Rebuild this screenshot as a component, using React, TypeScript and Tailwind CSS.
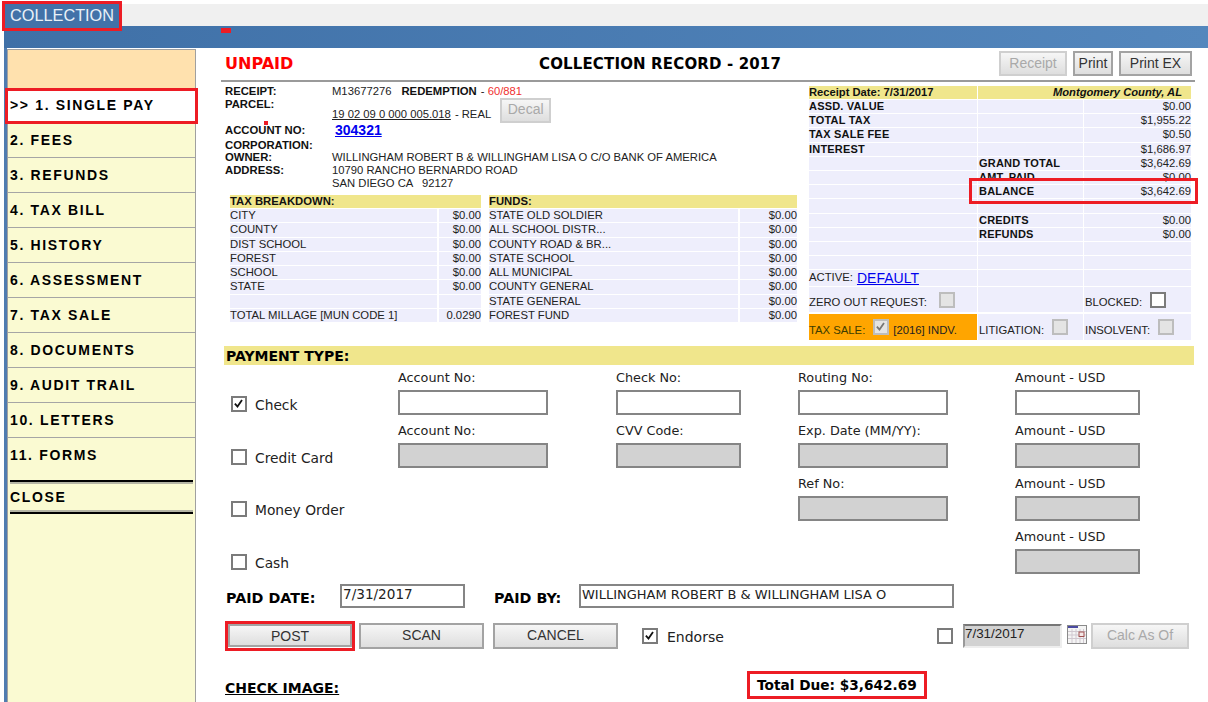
import React from 'react';

const menu = ['2. FEES', '3. REFUNDS', '4. TAX BILL', '5. HISTORY', '6. ASSESSMENT', '7. TAX SALE', '8. DOCUMENTS', '9. AUDIT TRAIL', '10. LETTERS', '11. FORMS'];

const taxRows = [
  ['CITY', '$0.00', 'STATE OLD SOLDIER', '$0.00'],
  ['COUNTY', '$0.00', 'ALL SCHOOL DISTR...', '$0.00'],
  ['DIST SCHOOL', '$0.00', 'COUNTY ROAD & BR...', '$0.00'],
  ['FOREST', '$0.00', 'STATE SCHOOL', '$0.00'],
  ['SCHOOL', '$0.00', 'ALL MUNICIPAL', '$0.00'],
  ['STATE', '$0.00', 'COUNTY GENERAL', '$0.00'],
  ['', '', 'STATE GENERAL', '$0.00'],
  ['TOTAL MILLAGE [MUN CODE 1]', '0.0290', 'FOREST FUND', '$0.00'],
];

const summaryRows = [
  ['ASSD. VALUE', '', '$0.00'],
  ['TOTAL TAX', '', '$1,955.22'],
  ['TAX SALE FEE', '', '$0.50'],
  ['INTEREST', '', '$1,686.97'],
  ['', 'GRAND TOTAL', '$3,642.69'],
  ['', 'AMT. PAID', '$0.00'],
  ['', 'BALANCE', '$3,642.69'],
  ['', '', ''],
  ['', 'CREDITS', '$0.00'],
  ['', 'REFUNDS', '$0.00'],
  ['', '', ''],
  ['', '', ''],
];

// checkbox, field labels per column (empty = no field)
const paymentRows = [
  { name: 'Check', checked: true, top: 'mt-[25px]', fields: ['Account No:', 'Check No:', 'Routing No:', 'Amount - USD'], enabled: true },
  { name: 'Credit Card', checked: false, top: 'mt-[25px]', fields: ['Account No:', 'CVV Code:', 'Exp. Date (MM/YY):', 'Amount - USD'], enabled: false },
  { name: 'Money Order', checked: false, top: 'mt-[24px]', fields: ['', '', 'Ref No:', 'Amount - USD'], enabled: false },
  { name: 'Cash', checked: false, top: 'mt-[24px]', fields: ['', '', '', 'Amount - USD'], enabled: false },
];

const fieldWidths = ['w-[150px]', 'w-[125px]', 'w-[150px]', 'w-[125px]'];

const CheckMark = ({ color = '#111' }: { color?: string }) => (
  <svg viewBox="0 0 16 16" className="w-full h-full">
    <path d="M2.5 7.5 L6 11.5 L12 2.8" fill="none" stroke={color} strokeWidth="2.4" />
  </svg>
);

const Box = ({ checked = false, disabled = false }: { checked?: boolean; disabled?: boolean }) => (
  <span
    className={`block shrink-0 w-[16px] h-[16px] border-2 ${
      disabled ? 'bg-[#e4e4e4] border-[#bdbdbd]' : 'bg-white border-[#7b7b7b]'
    }`}
  >
    {checked && <CheckMark color={disabled ? '#777' : '#111'} />}
  </span>
);

const Btn = ({ label, className, disabled = false }: { label: string; className: string; disabled?: boolean }) => (
  <button
    className={`block shrink-0 border-2 bg-gradient-to-b from-[#f6f6f6] to-[#dedede] text-center pb-[3px] ${
      disabled ? 'border-[#cfcfcf] text-[#a9a9a9]' : 'border-[#a3a3a3] text-[#333]'
    } ${className}`}
  >
    {label}
  </button>
);

const Sidebar = () => (
  <div className="w-[189px] mt-px border-x border-t border-[#a0a0a0] bg-[#fafad2] shrink-0 text-[14px] font-bold tracking-[1.65px] text-black">
    <div className="h-[38px] bg-[#ffe1ae]" />
    <div className="relative h-[36px] -mb-px -mx-[3px] bg-white border-[3px] border-[#ed1c24] flex items-center pl-[2px] pb-[2px]">&gt;&gt; 1. SINGLE PAY</div>
    {menu.map((item, i) => (
      <div key={item} className={`h-[35px] flex items-center pl-[2px] ${i < menu.length - 1 ? 'border-b border-[#a5a5a5]' : ''}`}>
        {item}
      </div>
    ))}
    <div className="mt-[7px] mx-[2px] h-[34px] border-y-2 border-black flex items-center shadow-[inset_0_2px_0_#b5b5a5,inset_0_-2px_0_#b5b5a5]">
      CLOSE
    </div>
  </div>
);

const InfoLabel = ({ children }: { children: React.ReactNode }) => (
  <span className="w-[107px] shrink-0 font-bold text-[11.3px] text-[#111]">{children}</span>
);

const Info = () => (
  <div className="h-[110px] relative text-[11.25px] text-[#222] leading-[13px]">
    <div className="h-[13px] flex">
      <InfoLabel>RECEIPT:</InfoLabel>
      <span>M13677276</span>
      <span className="ml-[10px] font-bold text-[11.3px] text-[#111]">REDEMPTION</span>
      <span className="ml-1">- <span className="text-[#f03030]">60/881</span></span>
    </div>
    <div className="h-[10px] flex"><InfoLabel>PARCEL:</InfoLabel></div>
    <div className="h-[14px] flex items-start">
      <span className="w-[107px]" />
      <span className="underline">19 02 09 0 000 005.018</span>
      <span className="ml-1">- REAL</span>
      <Btn label="Decal" disabled className="ml-[9px] -mt-[10px] w-[51px] h-[25px] text-[14px]" />
    </div>
    <div className="h-[14px] mt-px flex items-center">
      <InfoLabel>ACCOUNT NO:</InfoLabel>
      <a className="ml-[3px] text-[#0000ee] underline font-bold text-[14px]">304321</a>
    </div>
    <div className="h-[12px] mt-[2px] flex"><InfoLabel>CORPORATION:</InfoLabel></div>
    <div className="h-[13px] flex"><InfoLabel>OWNER:</InfoLabel><span>WILLINGHAM ROBERT B &amp; WILLINGHAM LISA O C/O BANK OF AMERICA</span></div>
    <div className="h-[13px] flex"><InfoLabel>ADDRESS:</InfoLabel><span>10790 RANCHO BERNARDO ROAD</span></div>
    <div className="h-[13px] flex"><span className="w-[107px]" /><span className="whitespace-pre">SAN DIEGO CA   92127</span></div>
    {/* stray marker from the annotation */}
    <span className="absolute left-[39px] top-[36px] w-[4px] h-[4px] bg-[#ed1c24]" />
  </div>
);

const TaxTables = () => (
  <div className="ml-[5px] w-[567px] text-[11.3px] text-[#222]">
    <div className="flex h-[13px] gap-[8px] font-bold text-[11.3px] text-[#111] leading-[13px]">
      <div className="w-[251px] bg-[#f0e68c]">TAX BREAKDOWN:</div>
      <div className="w-[308px] bg-[#f0e68c]">FUNDS:</div>
    </div>
    {taxRows.map((r, i) => (
      <div key={i} className="flex h-[14.3px] gap-[8px] leading-[13px] border-t border-white">
        <div className="w-[251px] flex bg-[#eeeefc]">
          <span className="w-[209px] border-r-2 border-white">{r[0]}</span>
          <span className="flex-1 text-right">{r[1]}</span>
        </div>
        <div className="w-[308px] flex bg-[#eeeefc]">
          <span className="w-[251px] border-r-2 border-white">{r[2]}</span>
          <span className="flex-1 text-right">{r[3]}</span>
        </div>
      </div>
    ))}
  </div>
);

const SummaryPanel = () => (
  <div className="relative w-[382px] ml-[12px] mt-[1px] text-[11.3px] text-[#222]">
    <div className="flex h-[13px] gap-px bg-white font-bold text-[11.2px] text-[#111] leading-[13px]">
      <div className="w-[168px] bg-[#f0e68c]">Receipt Date: 7/31/2017</div>
      <div className="flex-1 bg-[#f0e68c] text-right italic pr-[9px]">Montgomery County, AL</div>
    </div>
    {summaryRows.map((r, i) => (
      <div key={i} className="flex h-[14.2px] gap-px border-t border-white leading-[13px]">
        <div className="w-[168px] bg-[#eeeefc] font-bold text-[11px] tracking-[0.2px] text-[#111]">{r[0]}</div>
        <div className="w-[105px] bg-[#eeeefc] font-bold text-[11px] tracking-[0.2px] text-[#111] pl-px">{r[1]}</div>
        <div className="flex-1 bg-[#eeeefc] text-right">{r[2]}</div>
      </div>
    ))}
    <div className="flex h-[17px] gap-px border-t border-white">
      <div className="w-[168px] bg-[#eeeefc] flex items-end">
        ACTIVE: <a className="ml-1 text-[14px] leading-[16px] text-[#0000ee] underline">DEFAULT</a>
      </div>
      <div className="w-[105px] bg-[#eeeefc]" />
      <div className="flex-1 bg-[#eeeefc]" />
    </div>
    <div className="flex h-[27px] gap-px border-y border-white">
      <div className="w-[168px] bg-[#eeeefc] flex items-center">
        <span className="mt-[6px]">ZERO OUT REQUEST:</span>
        <span className="ml-[12px]"><Box disabled /></span>
      </div>
      <div className="w-[105px] bg-[#eeeefc]" />
      <div className="flex-1 bg-[#eeeefc] flex items-center pl-px">
        <span className="mt-[6px]">BLOCKED:</span>
        <span className="ml-[8px]"><Box /></span>
      </div>
    </div>
    <div className="flex h-[26px] gap-px mt-px">
      <div className="w-[168px] bg-[#ffa500] flex items-center text-[#3d3d00]">
        <span className="mt-[6px]">TAX SALE:</span>
        <span className="ml-[8px] mr-[4px]"><Box checked disabled /></span>
        <span className="mt-[6px] text-[#222]">[2016] INDV.</span>
      </div>
      <div className="w-[105px] bg-[#eeeefc] flex items-center pl-px">
        <span className="mt-[6px]">LITIGATION:</span>
        <span className="ml-[8px]"><Box disabled /></span>
      </div>
      <div className="flex-1 bg-[#eeeefc] flex items-center pl-px">
        <span className="mt-[6px]">INSOLVENT:</span>
        <span className="ml-[8px]"><Box disabled /></span>
      </div>
    </div>
    {/* BALANCE highlight */}
    <span className="absolute left-[160px] top-[92px] w-[229px] h-[26px] border-[3px] border-[#ed1c24]" />
  </div>
);

const Field = ({ label, width, enabled }: { label: string; width: string; enabled: boolean }) => (
  <div className="h-[53px]">
    {label && (
      <>
        <div className="h-[19px] leading-[13px] text-[12.8px] text-[#222]">{label}</div>
        <input
          readOnly
          className={`block h-[25px] border-2 border-[#858585] ${width} ${enabled ? 'bg-white' : 'bg-[#d2d2d2]'}`}
        />
      </>
    )}
  </div>
);

const Payment = () => (
  <div className="font-['DejaVu_Sans',Verdana,sans-serif]">
    <div className="ml-[3px] w-[970px] h-[19px] bg-[#f0e68c] font-bold text-[14px] leading-[20px] pl-[2px] text-black">PAYMENT TYPE:</div>
    <div className="mt-[6px] ml-[3px] grid grid-cols-[174px_218px_182px_217px_125px]">
      {paymentRows.map((row) => (
        <React.Fragment key={row.name}>
          <div className={`${row.top} ml-[7px] flex items-center gap-[8px] h-[16px] text-[13.8px] text-[#222]`}>
            <Box checked={row.checked} />
            <span className="mt-[2px]">{row.name}</span>
          </div>
          {row.fields.map((f, i) => (
            <Field key={i} label={f} width={fieldWidths[i]} enabled={row.enabled} />
          ))}
        </React.Fragment>
      ))}
    </div>
    <div className="mt-px ml-[5px] flex items-center h-[24px]">
      <span className="w-[114px] font-bold text-[14.3px] text-black mt-[4px]">PAID DATE:</span>
      <input readOnly defaultValue="7/31/2017" className="w-[125px] h-[24px] border-2 border-[#858585] pl-px pb-[4px] text-[13.6px] text-[#222]" />
      <span className="ml-[29px] w-[85px] font-bold text-[14.3px] text-black mt-[4px]">PAID BY:</span>
      <input readOnly defaultValue="WILLINGHAM ROBERT B & WILLINGHAM LISA O" className="w-[375px] h-[24px] border-2 border-[#858585] pl-px pb-[4px] text-[13px] text-[#222]" />
    </div>
  </div>
);

const CalendarIcon = () => (
  <svg width="20" height="19" viewBox="0 0 20 19" className="shrink-0 ml-[5px] -mt-[4px]">
    <rect x="0.5" y="0.5" width="19" height="18" fill="#f4f4f4" stroke="#8a8a8a" />
    <rect x="1" y="1" width="10" height="2" fill="#4a4aa0" />
    <path d="M1 6.5H19M1 10H19M1 13.5H19M5 4V18M9 4V18M13 4V18M16.5 4V18" stroke="#d0c8d0" />
    <rect x="12" y="7" width="5" height="4.5" fill="#f4e8e8" stroke="#a05050" />
  </svg>
);

const Actions = () => (
  <div className="mt-[13px] ml-[4px] flex items-center h-[30px] text-[14px] font-['Liberation_Sans',Arial,sans-serif]">
    <div className="shrink-0 border-[3px] border-[#ed1c24] w-[130px] h-[30px]">
      <Btn label="POST" className="w-full h-[23px]" />
    </div>
    <Btn label="SCAN" className="ml-[4px] w-[125px] h-[26px]" />
    <Btn label="CANCEL" className="ml-[9px] w-[125px] h-[26px]" />
    <span className="ml-[24px]"><Box checked /></span>
    <span className="ml-[9px] w-[56px] text-[14px] font-['DejaVu_Sans',Verdana,sans-serif] text-[#222] mt-[2px]">Endorse</span>
    <span className="ml-[214px]"><Box /></span>
    <input
      readOnly
      defaultValue="7/31/2017"
      className="ml-[10px] w-[99px] h-[24px] shrink-0 border-2 border-t-[#777] border-l-[#999] border-r-[#eee] border-b-[#eee] bg-[#d2d2d2] pb-[5px] text-[13.4px] text-[#222]"
    />
    <CalendarIcon />
    <Btn label="Calc As Of" disabled className="ml-[4px] w-[98px] h-[26px]" />
  </div>
);

export default function App() {
  return (
    <div className="w-[1208px] h-[702px] overflow-hidden bg-white flex flex-col font-['Liberation_Sans',Arial,sans-serif]">
      {/* Top tab strip */}
      <div className="h-[26px] shrink-0 pt-[4px] pl-[4px] relative">
        <div className="h-[22px] bg-[#f0f0f0]" />
        <div className="absolute left-[2px] top-[1px] z-10 w-[120px] h-[30px] border-[3px] border-[#ed1c24] bg-[#4272a8] text-[#e9f0f7] text-[16.3px] leading-[23px] pl-[5px]">
          COLLECTION
        </div>
      </div>
      <div className="relative h-[22px] shrink-0 ml-[4px] bg-gradient-to-r from-[#3f70a7] to-[#5487bd]">
        <span className="absolute left-[217px] top-[2px] w-[10px] h-[5px] bg-[#ed1c24]" />
      </div>

      <div className="flex flex-1 min-h-0">
        <div className="w-[3px] ml-[4px] shrink-0 bg-[#4f7cb0]" />
        <Sidebar />

        {/* Record */}
        <div className="ml-[25px] w-[974px] shrink-0">
          <div className="h-[32px] flex items-start pt-[3px] pl-[4px]">
            <span className="w-[314px] pt-[3px] font-bold text-[16px] leading-[20px] text-[#ff0000] font-['DejaVu_Sans',Verdana,sans-serif]">UNPAID</span>
            <span className="pt-[4px] font-bold text-[15px] tracking-[0.15px] leading-[18px] text-black font-['DejaVu_Sans',Verdana,sans-serif]">COLLECTION RECORD - 2017</span>
            <div className="ml-auto flex gap-[6px] text-[14px] mr-[3px]">
              <Btn label="Receipt" disabled className="w-[68px] h-[25px]" />
              <Btn label="Print" className="w-[40px] h-[25px]" />
              <Btn label="Print EX" className="w-[73px] h-[25px]" />
            </div>
          </div>
          <div className="h-[2px] bg-[#9a9a9a]" />

          <div className="flex mt-[3px]">
            <div className="w-[576px] pl-[4px]">
              <Info />
              <TaxTables />
            </div>
            <SummaryPanel />
          </div>

          <div className="mt-[6px]">
            <Payment />
            <Actions />
          </div>

          <div className="mt-[20px] flex items-center ml-[4px] font-['DejaVu_Sans',Verdana,sans-serif] font-bold text-[14px] text-black">
            <span className="w-[522px] underline mt-[6px]">CHECK IMAGE:</span>
            <span className="w-[180px] h-[28px] border-[3px] border-[#ed1c24] flex items-center pl-[7px] text-[13.7px] whitespace-nowrap">Total Due: $3,642.69</span>
          </div>
        </div>
      </div>
    </div>
  );
}
